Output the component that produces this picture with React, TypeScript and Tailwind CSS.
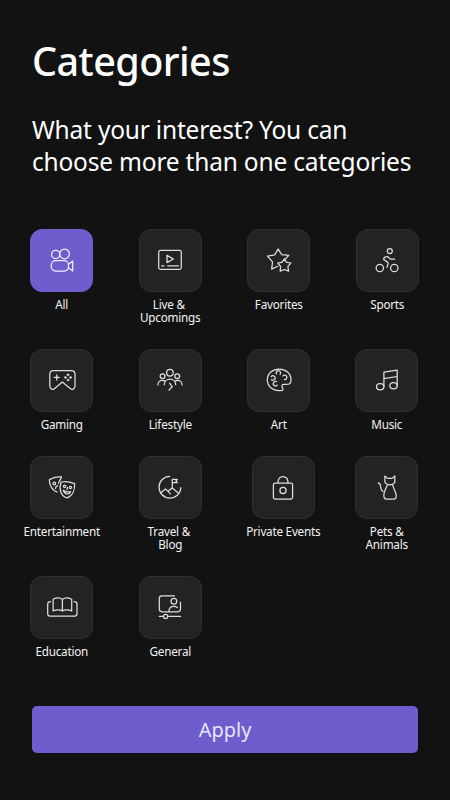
import { useState, type ReactNode } from "react";

type Category = {
  label: string;
  icon: ReactNode;
  className?: string;
};

function Icon({ children }: { children: ReactNode }) {
  return (
    <svg
      viewBox="0 0 32 32"
      className="mb-px size-8 shrink-0"
      fill="none"
      stroke="currentColor"
      strokeWidth={1.25}
      strokeLinecap="round"
      strokeLinejoin="round"
    >
      {children}
    </svg>
  );
}

const rows: Category[][] = [
  [
    {
      label: "All",
      icon: (
        <Icon>
          <circle cx="9.7" cy="10.4" r="4.1" />
          <circle cx="18.5" cy="9.9" r="4.9" />
          <rect x="5.3" y="16.6" width="17.2" height="10.4" rx="4.4" />
          <path d="M22.5 20.2 26.7 17v10l-4.2-3.2" />
        </Icon>
      ),
    },
    {
      label: "Live & \nUpcomings",
      icon: (
        <Icon>
          <rect x="4.7" y="6.4" width="22.6" height="19" rx="1.8" />
          <path d="M13 11.4v7.2l6.4-3.6z" />
          <path d="M7.6 21.8h2.6M13.7 21.8h10.8" />
        </Icon>
      ),
    },
    {
      label: "Favorites",
      icon: (
        <Icon>
          <path d="M14.7 22.2 8.7 25.1l.8-7.3-5-5.6 7.2-1.3L15.1 5l3.6 5.6 7.1.8-3.6 3.7" />
          <path d="m21.4 14.9 2 3.3 4.5.8-3 3.3.7 4.8-4.2-1.6-4.2 1.7.4-4.7-2.9-3.3 4.5-1z" />
        </Icon>
      ),
    },
    {
      label: "Sports",
      icon: (
        <Icon>
          <circle cx="18.8" cy="7" r="2.5" />
          <circle cx="8.8" cy="24" r="3.7" />
          <circle cx="23.3" cy="24" r="3.7" />
          <path d="M23.6 15.2h-3.4c-2.2 0-2.1-2.6-4-2.6-1.6 0-3.7 1.2-3.6 2.5.1 1.5 4.3 2.1 4.5 3.9.1 1.6-.6 2.7-1.2 4.4" />
        </Icon>
      ),
    },
  ],
  [
    {
      label: "Gaming",
      icon: (
        <Icon>
          <path d="M7.4 6.5h18c2.2 0 3.6 1.4 3.6 3.6v12c0 3.1-3 4.2-4.8 2.4L16.4 18l-7.8 6.5c-1.8 1.8-4.8.7-4.8-2.4v-12c0-2.2 1.4-3.6 3.6-3.6z" />
          <path d="M8.2 13.4h5M10.7 10.9v5" />
          <g fill="currentColor" strokeWidth={0.5}>
            <circle cx="22" cy="10.8" r="1" />
            <circle cx="22" cy="16" r="1" />
            <circle cx="19.4" cy="13.4" r="1" />
            <circle cx="24.6" cy="13.4" r="1" />
          </g>
        </Icon>
      ),
    },
    {
      label: "Lifestyle",
      icon: (
        <Icon>
          <circle cx="15.9" cy="8.7" r="3.3" />
          <circle cx="8.6" cy="12.3" r="2.4" />
          <circle cx="23.2" cy="12.3" r="2.4" />
          <path d="M3.9 21c0-2.8 2-4.6 4.4-4.6 1 0 1.8.2 2.4.6M28.1 21c0-2.8-2-4.6-4.4-4.6-1 0-1.8.2-2.4.6" />
          <path d="M10.3 20.7c0-3.2 2.5-5.5 5.7-5.5s5.7 2.3 5.7 5.5" />
          <path d="m15.5 19.2 2.7 3.5-3.3 3.4" />
        </Icon>
      ),
    },
    {
      label: "Art",
      icon: (
        <Icon>
          <path d="M19 26.5C10.5 27.8 4.3 22.8 4.3 15.7 4.3 9.2 9.7 5 16 5c6.8 0 12 4.4 12 10.7 0 4.3-2 5-6 4.6-3.3-.3-3.6 1.6-2.6 3.6.7 1.3.7 2.4-.4 2.6z" />
          <path d="M13.4 9.9a2.2 2.2 0 1 1 3.7.4M8.3 12.5a2.2 2.2 0 1 1 .2 3.2M13.3 17.7a2.2 2.2 0 1 0 .9 3.4M19.9 12a2.2 2.2 0 1 1 1.6 3.5" />
        </Icon>
      ),
    },
    {
      label: "Music",
      className: "pr-px",
      icon: (
        <Icon>
          <ellipse cx="9.2" cy="22.7" rx="3.7" ry="3.1" />
          <ellipse cx="22.5" cy="21.7" rx="3.7" ry="3.1" />
          <path d="M12.9 22.7V8.2l13.3-2.1v15.6M12.9 14.7l13.3-2.2" />
        </Icon>
      ),
    },
  ],
  [
    {
      label: "Entertainment",
      icon: (
        <Icon>
          <path d="M15.1 11c4.2-1 9.2-.2 13.6 1.6.2 6.5-2.2 12.7-7.7 14.2-6.4-1.6-8.3-9.3-5.9-15.8z" />
          <path d="M14.2 8.8 15.5 5.9C11.2 5.4 6.8 6.4 3.3 8.7c.2 5.4 2.4 10.2 7.8 12.3" />
          <path d="M9.5 17.3c.2-1.3.9-2.2 2.2-2.6M12.3 12.3l1.9-3.5" />
          <circle cx="8.3" cy="12.5" r="1.3" />
          <circle cx="18.6" cy="15.3" r="1.2" />
          <circle cx="24.4" cy="16.5" r="1.2" />
          <path d="m21.4 16.3-.4 2.2M17.3 19.2c2.2 1.5 4.8 2.1 7.3 1.5-1.4 3.5-6.5 2.8-7.3-1.500z" />
        </Icon>
      ),
    },
    {
      label: "Travel & \nBlog",
      icon: (
        <Icon>
          <path d="M15.8 5.3A10.9 10.9 0 1 0 26.8 16.7" />
          <path d="M18.3 17V8.4h5L21.9 10l1.4 1.7h-5" />
          <path d="m6.4 22 5.1-4.1 4.9 5M14.2 20.1l4.1-3.1 6.4 5.2" />
        </Icon>
      ),
    },
    {
      label: "Private Events",
      className: "pl-[9px]",
      icon: (
        <Icon>
          <rect x="6.4" y="12" width="19.2" height="16" rx="1.8" />
          <path d="M11 11.8c0-3.9 1.8-6.3 5-6.3s5 2.4 5 6.3" />
          <circle cx="16" cy="19.5" r="3.1" />
        </Icon>
      ),
    },
    {
      label: "Pets &\nAnimals",
      className: "pr-px",
      icon: (
        <Icon>
          <path d="m13.9 5 2.7 2.4h4.5L23.8 5v6.3c-2.5 3.3-7.4 3.3-9.9 0z" />
          <path d="M16.3 14.2c-1.5 3.5-3.5 6.5-3.5 10 0 2.6 1 3.9 3 3.9h6.800c2 0 3-1.300 2.600-3.900-.5-3.500-2.700-6.500-3.500-10" />
          <path d="M7.2 11.9c2.4.4 2.4 2.4 2.5 4.2 0 2 .6 3.5 2.3 4.4" />
        </Icon>
      ),
    },
  ],
  [
    {
      label: "Education",
      icon: (
        <Icon>
          <path d="M16.4 8.5c-2-1.6-6-1.8-9.3-.3v11.7c3-1.5 7.3-1.3 9.3.1 2-1.4 6.3-1.6 9.3-.1V8.2c-3.3-1.5-7.3-1.3-9.3.3zM16.4 8.5V20" />
          <path d="M4.6 10.5c-1.9 0-2.9.9-2.9 2.6v9.7c0 1.6.7 2.3 2.3 2.3h24.7c1.6 0 2.3-.7 2.3-2.3v-9.7c0-1.7-1-2.6-2.9-2.6" />
        </Icon>
      ),
    },
    {
      label: "General",
      icon: (
        <Icon>
          <path d="M20.5 4.8H8c-1.8 0-2.7.9-2.7 2.7v10.6c0 1.8.9 2.7 2.7 2.7h15.8c1.8 0 2.7-.9 2.7-2.7v-6.9" />
          <circle cx="19.9" cy="10.3" r="2.9" />
          <path d="M14.9 20.5c.1-3.3 2-5.1 5-5.1 1.5 0 2.6.4 3.5 1.2" />
          <circle cx="11.6" cy="25.4" r="2.1" />
          <path d="M5.3 25.4h4M14 25.4h12.5" />
        </Icon>
      ),
    },
  ],
];

function CategoryTile({ category, active, onSelect }: { category: Category; active: boolean; onSelect: () => void }) {
  return (
    <button type="button" onClick={onSelect} className={`flex flex-col items-center ${category.className ?? ""}`}>
      <span
        className={`flex size-[63px] items-center justify-center rounded-[12px] border ${
          active ? "border-[#6d5dcd] bg-[#6d5dcd] text-[#f1eefc]" : "border-[#303030] bg-[#232323] text-[#dedede]"
        }`}
      >
        {category.icon}
      </span>
      <span className="mt-[5.5px] whitespace-pre text-center text-[11.7px] leading-[13px] tracking-[-0.22px] text-[#f2f2f2]">
        {category.label}
      </span>
    </button>
  );
}

export default function App() {
  const [selected, setSelected] = useState("All");

  return (
    <main className="h-[800px] w-[450px] overflow-hidden bg-[#121212] font-['Noto_Sans',sans-serif] text-white">
      <header className="px-8 pt-9">
        <h1 className="text-[39.5px] font-medium leading-[50px] tracking-[-0.55px]">Categories</h1>
        <p className="mt-7 whitespace-nowrap text-[24.5px] leading-8 tracking-[-0.2px]">
          What your interest? You can
          <br />
          choose more than one categories
        </p>
      </header>

      <section className="mt-[51px] grid grid-rows-[120px_107px_120px_130px] pl-[7.5px]">
        {rows.map((row, index) => (
          <div key={index} className="grid grid-cols-[repeat(4,108.5px)] items-start">
            {row.map((category) => (
              <CategoryTile
                key={category.label}
                category={category}
                active={selected === category.label}
                onSelect={() => setSelected(category.label)}
              />
            ))}
          </div>
        ))}
      </section>

      <div className="px-8">
        <button type="button" className="h-[47px] w-full rounded-[5px] bg-[#6d5dcd] text-[20px] text-[#e9e5fa]">
          Apply
        </button>
      </div>
    </main>
  );
}
